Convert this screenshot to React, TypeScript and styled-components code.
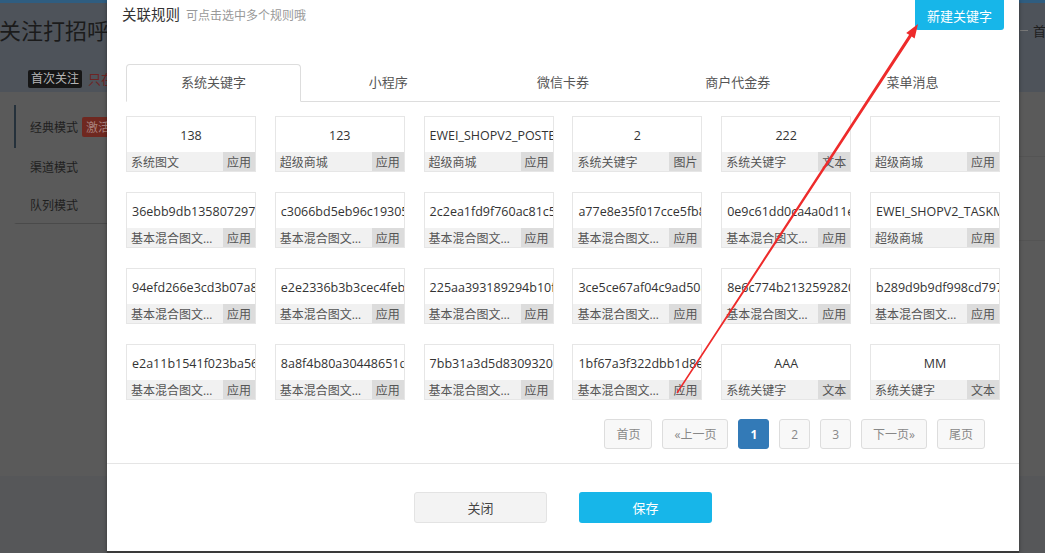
import styled, { createGlobalStyle } from 'styled-components';

const Global = createGlobalStyle`
  html, body {
    margin: 0;
    padding: 0;
  }
  body {
    font-family: "Open Sans", "Noto Sans CJK SC", sans-serif;
    overflow: hidden;
  }
  * {
    box-sizing: border-box;
  }
`;

/* ---------- dimmed page behind the dialog ---------- */

const Page = styled.div`
  position: relative;
  width: 100%;
  height: 553px;
  overflow: hidden;
  background: #5a5a5a;
  display: flex;
  flex-direction: column;
`;

const TopStrip = styled.div`
  height: 3px;
  background: #2f5d80;
`;

const Header = styled.div`
  height: 89px;
  background: #4e535a;
  padding-top: 13px;
`;

const TitleRow = styled.div`
  display: flex;
  align-items: center;
  justify-content: space-between;
`;

const PageTitle = styled.h1`
  margin: 0 0 0 -1px;
  font-size: 22px;
  font-weight: normal;
  line-height: 28px;
  color: #1b1b1b;
`;

const Crumb = styled.div`
  display: flex;
  align-items: center;
  gap: 5px;
  margin-right: -14px;
  font-size: 13px;
  color: #1e1e1e;

  .sep {
    width: 8px;
    height: 1px;
    background: #777;
  }
`;

const BadgeRow = styled.div`
  display: flex;
  align-items: center;
  margin-top: 25px;
  padding-left: 28px;
  font-size: 12px;
`;

const DarkBadge = styled.span`
  background: #161616;
  color: #b5b5b5;
  line-height: 18px;
  padding: 0 3px;
  border-radius: 2px;
`;

const RedText = styled.span`
  color: #6e2424;
  margin-left: 6px;
  font-size: 13px;
`;

const Main = styled.div`
  flex: 1;
  display: flex;
`;

const Side = styled.div`
  width: 120px;
  margin: 13px 0 0 14px;
  flex-shrink: 0;
`;

const SideItem = styled.div<{ $active?: boolean }>`
  display: flex;
  align-items: center;
  height: ${(p) => (p.$active ? '43px' : '38px')};
  padding-left: 14px;
  font-size: 12px;
  color: #1f1f1f;
  border-left: 2px solid ${(p) => (p.$active ? '#25313b' : 'transparent')};

  &:last-child {
    border-bottom: 1px solid #4a4a4a;
  }
`;

const RedBadge = styled.span`
  margin-left: 4px;
  padding: 1px 4px;
  background: #6f2820;
  color: #a8807c;
  border-radius: 2px;
`;

const Content = styled.div`
  flex: 1;
  margin-top: 64px;
  height: 85px;
  border-top: 1px solid #545454;
  border-bottom: 1px solid #545454;
`;

const PageFoot = styled.div`
  height: 77px;
  background: #565759;
`;

/* ---------- dialog ---------- */

const Modal = styled.div`
  position: absolute;
  left: 107px;
  top: 0;
  width: 912px;
  background: #fff;
  box-shadow: 0 0 4px rgba(0, 0, 0, 0.4);
  border-bottom: 2px solid #3a3a3a;
`;

const ModalHead = styled.div`
  display: flex;
  align-items: flex-start;
  justify-content: space-between;
  height: 30px;
  padding: 0 15px 0 15px;
`;

const ModalTitle = styled.div`
  line-height: 30px;
  font-size: 14.5px;
  color: #333;

  small {
    font-size: 12px;
    color: #999;
    margin-left: 6px;
  }
`;

const PrimaryButton = styled.button<{ $wide?: boolean }>`
  height: ${(p) => (p.$wide ? '31px' : '30px')};
  width: ${(p) => (p.$wide ? '133px' : 'auto')};
  padding: 0 12px;
  border: none;
  border-radius: ${(p) => (p.$wide ? '3px' : '0 0 3px 3px')};
  background: #17b6e9;
  color: #fff;
  font-family: inherit;
  font-size: 13px;
`;

const Body = styled.div`
  padding: 34px 19px 14px;
`;

const Tabs = styled.div`
  display: flex;
  border-bottom: 1px solid #ddd;
  height: 38px;
`;

const Tab = styled.div<{ $active?: boolean }>`
  flex: 1;
  text-align: center;
  line-height: 35px;
  height: 38px;
  font-size: 13px;
  color: #555;
  border: 1px solid transparent;
  border-radius: 4px 4px 0 0;
  ${(p) =>
    p.$active &&
    `
    background: #fff;
    border-color: #ddd #ddd transparent;
  `}
`;

const Grid = styled.div`
  display: grid;
  grid-template-columns: repeat(6, 130px);
  justify-content: space-between;
  row-gap: 20px;
  margin-top: 14px;
`;

const Card = styled.div`
  height: 56px;
  border: 1px solid #e6e6e6;
  display: flex;
  flex-direction: column;
`;

const CardTitle = styled.div`
  height: 35px;
  padding: 3px 5px 0;
  line-height: 32px;
  text-align: center;
  white-space: nowrap;
  overflow: hidden;
  font-size: 12.5px;
  color: #333;
`;

const CardFoot = styled.div`
  display: flex;
  height: 19px;
  overflow: hidden;
  background: #f1f1f1;
  font-size: 12px;
  color: #555;
`;

const CardLabel = styled.span`
  flex: 1;
  min-width: 0;
  padding-left: 4px;
  line-height: 21px;
  white-space: nowrap;
  overflow: hidden;
  text-overflow: ellipsis;
`;

const CardTag = styled.span`
  padding: 0 4px;
  line-height: 21px;
  background: #dcdcdc;
`;

const Pager = styled.div`
  display: flex;
  justify-content: flex-end;
  gap: 10px;
  margin-top: 19px;
  padding-right: 15px;
`;

const PageBtn = styled.button<{ $active?: boolean }>`
  height: 30px;
  padding: 0 11px;
  border: 1px solid ${(p) => (p.$active ? '#337ab7' : '#ddd')};
  border-radius: 3px;
  background: ${(p) => (p.$active ? '#337ab7' : '#f8f8f8')};
  color: ${(p) => (p.$active ? '#fff' : '#888')};
  font-family: inherit;
  font-size: 12px;
  font-weight: ${(p) => (p.$active ? 'bold' : 'normal')};
`;

const ModalFoot = styled.div`
  display: flex;
  justify-content: center;
  gap: 32px;
  padding: 28px 0;
  border-top: 1px solid #e5e5e5;
`;

const GhostButton = styled.button`
  width: 133px;
  height: 31px;
  border: 1px solid #e3e3e3;
  border-radius: 3px;
  background: #f3f3f3;
  color: #444;
  font-family: inherit;
  font-size: 13px;
`;

const Arrow = styled.svg`
  position: absolute;
  left: 0;
  top: 0;
  pointer-events: none;
`;

type Rule = { title: string; label: string; tag: string };

const rules: Rule[] = [
  { title: '138', label: '系统图文', tag: '应用' },
  { title: '123', label: '超级商城', tag: '应用' },
  { title: 'EWEI_SHOPV2_POSTER', label: '超级商城', tag: '应用' },
  { title: '2', label: '系统关键字', tag: '图片' },
  { title: '222', label: '系统关键字', tag: '文本' },
  { title: '', label: '超级商城', tag: '应用' },
  { title: '36ebb9db1358072971a0c', label: '基本混合图文消息', tag: '应用' },
  { title: 'c3066bd5eb96c19305ab2', label: '基本混合图文消息', tag: '应用' },
  { title: '2c2ea1fd9f760ac81c5d3', label: '基本混合图文消息', tag: '应用' },
  { title: 'a77e8e35f017cce5fb8a1', label: '基本混合图文消息', tag: '应用' },
  { title: '0e9c61dd0ca4a0d11e7f2', label: '基本混合图文消息', tag: '应用' },
  { title: 'EWEI_SHOPV2_TASKMSG', label: '超级商城', tag: '应用' },
  { title: '94efd266e3cd3b07a8c41', label: '基本混合图文消息', tag: '应用' },
  { title: 'e2e2336b3b3cec4feb07d', label: '基本混合图文消息', tag: '应用' },
  { title: '225aa393189294b10f6e2', label: '基本混合图文消息', tag: '应用' },
  { title: '3ce5ce67af04c9ad508b4', label: '基本混合图文消息', tag: '应用' },
  { title: '8e6c774b21325928201f9', label: '基本混合图文消息', tag: '应用' },
  { title: 'b289d9b9df998cd797e30', label: '基本混合图文消息', tag: '应用' },
  { title: 'e2a11b1541f023ba56d07', label: '基本混合图文消息', tag: '应用' },
  { title: '8a8f4b80a30448651d2c9', label: '基本混合图文消息', tag: '应用' },
  { title: '7bb31a3d5d8309320a4e1', label: '基本混合图文消息', tag: '应用' },
  { title: '1bf67a3f322dbb1d8e9a5', label: '基本混合图文消息', tag: '应用' },
  { title: 'AAA', label: '系统关键字', tag: '文本' },
  { title: 'MM', label: '系统关键字', tag: '文本' },
];

const tabs = ['系统关键字', '小程序', '微信卡券', '商户代金券', '菜单消息'];
const pages = [
  { text: '首页' },
  { text: '«上一页' },
  { text: '1', active: true },
  { text: '2' },
  { text: '3' },
  { text: '下一页»' },
  { text: '尾页' },
];

const App = () => {
  return (
    <>
      <Global />
      <Page>
        <TopStrip />
        <Header>
          <TitleRow>
            <PageTitle>关注打招呼</PageTitle>
            <Crumb>
              <span className="sep" />
              <span>首页</span>
            </Crumb>
          </TitleRow>
          <BadgeRow>
            <DarkBadge>首次关注</DarkBadge>
            <RedText>只在</RedText>
          </BadgeRow>
        </Header>
        <Main>
          <Side>
            <SideItem $active>
              经典模式<RedBadge>激活</RedBadge>
            </SideItem>
            <SideItem>渠道模式</SideItem>
            <SideItem>队列模式</SideItem>
          </Side>
          <Content />
        </Main>
        <PageFoot />

        <Modal>
          <ModalHead>
            <ModalTitle>
              关联规则<small>可点击选中多个规则哦</small>
            </ModalTitle>
            <PrimaryButton>新建关键字</PrimaryButton>
          </ModalHead>
          <Body>
            <Tabs>
              {tabs.map((t, i) => (
                <Tab key={t} $active={i === 0}>
                  {t}
                </Tab>
              ))}
            </Tabs>
            <Grid>
              {rules.map((r, i) => (
                <Card key={i}>
                  <CardTitle>{r.title}</CardTitle>
                  <CardFoot>
                    <CardLabel>{r.label}</CardLabel>
                    <CardTag>{r.tag}</CardTag>
                  </CardFoot>
                </Card>
              ))}
            </Grid>
            <Pager>
              {pages.map((p) => (
                <PageBtn key={p.text} $active={p.active}>
                  {p.text}
                </PageBtn>
              ))}
            </Pager>
          </Body>
          <ModalFoot>
            <GhostButton>关闭</GhostButton>
            <PrimaryButton $wide>保存</PrimaryButton>
          </ModalFoot>
        </Modal>

        <Arrow width="1045" height="553" viewBox="0 0 1045 553">
          <polygon
            points="676.4,392.6 677.6,393.4 911.7,36.6 914.6,38.4 918,24 906.2,33 909.1,34.8"
            fill="#ee2b2b"
          />
        </Arrow>
      </Page>
    </>
  );
};

export default App;
